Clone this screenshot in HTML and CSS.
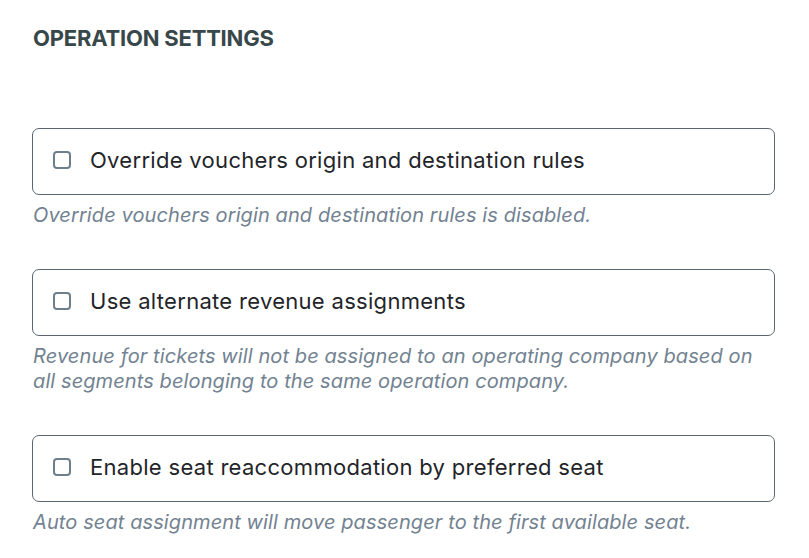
FILE: index.html
```html
<!DOCTYPE html>
<html lang="en">
<head>
  <meta charset="UTF-8">
  <meta name="viewport" content="width=device-width, initial-scale=1.0">
  <title>Operation settings</title>
  <link rel="stylesheet" href="styles.css">
</head>
<body>
  <h2 class="section-title">OPERATION SETTINGS</h2>

  <div class="setting">
    <label class="setting-box">
      <input type="checkbox">
      <span>Override vouchers origin and destination rules</span>
    </label>
    <p class="hint">Override vouchers origin and destination rules is disabled.</p>
  </div>

  <div class="setting">
    <label class="setting-box">
      <input type="checkbox">
      <span>Use alternate revenue assignments</span>
    </label>
    <p class="hint">Revenue for tickets will not be assigned to an operating company based on all segments belonging to the same operation company.</p>
  </div>

  <div class="setting">
    <label class="setting-box">
      <input type="checkbox">
      <span>Enable seat reaccommodation by preferred seat</span>
    </label>
    <p class="hint">Auto seat assignment will move passenger to the first available seat.</p>
  </div>
</body>
</html>
```

FILE: styles.css
```css
body {
  margin: 0;
  padding: 24px 34px 0 32px;
  font-family: Inter, "Noto Sans", sans-serif;
  background: #fff;
  color: #1f2529;
}
.section-title {
  margin: 0 0 0 1px;
  font-size: 22px;
  font-weight: 700;
  line-height: 28px;
  color: #37474a;
  letter-spacing: -0.2px;
}
.section-title + .setting {
  margin-top: 76px;
}
.setting-box {
  display: flex;
  align-items: center;
  gap: 19px;
  height: 65px;
  box-sizing: border-box;
  height: 67px;
  padding: 0 20px 3px;
  border: 1px solid #5b6770;
  border-radius: 7px;
  font-size: 22px;
  letter-spacing: 0.3px;
  cursor: pointer;
}
.setting-box input {
  appearance: none;
  margin: 0;
  width: 18px;
  height: 18px;
  border: 2px solid #6e7f8c;
  border-radius: 4px;
  background: #fff;
  flex-shrink: 0;
}
.hint {
  margin: 8px 0 41px 1px;
  font-size: 20px;
  line-height: 25px;
  letter-spacing: 0.1px;
  font-style: italic;
  color: #728291;
}
```
